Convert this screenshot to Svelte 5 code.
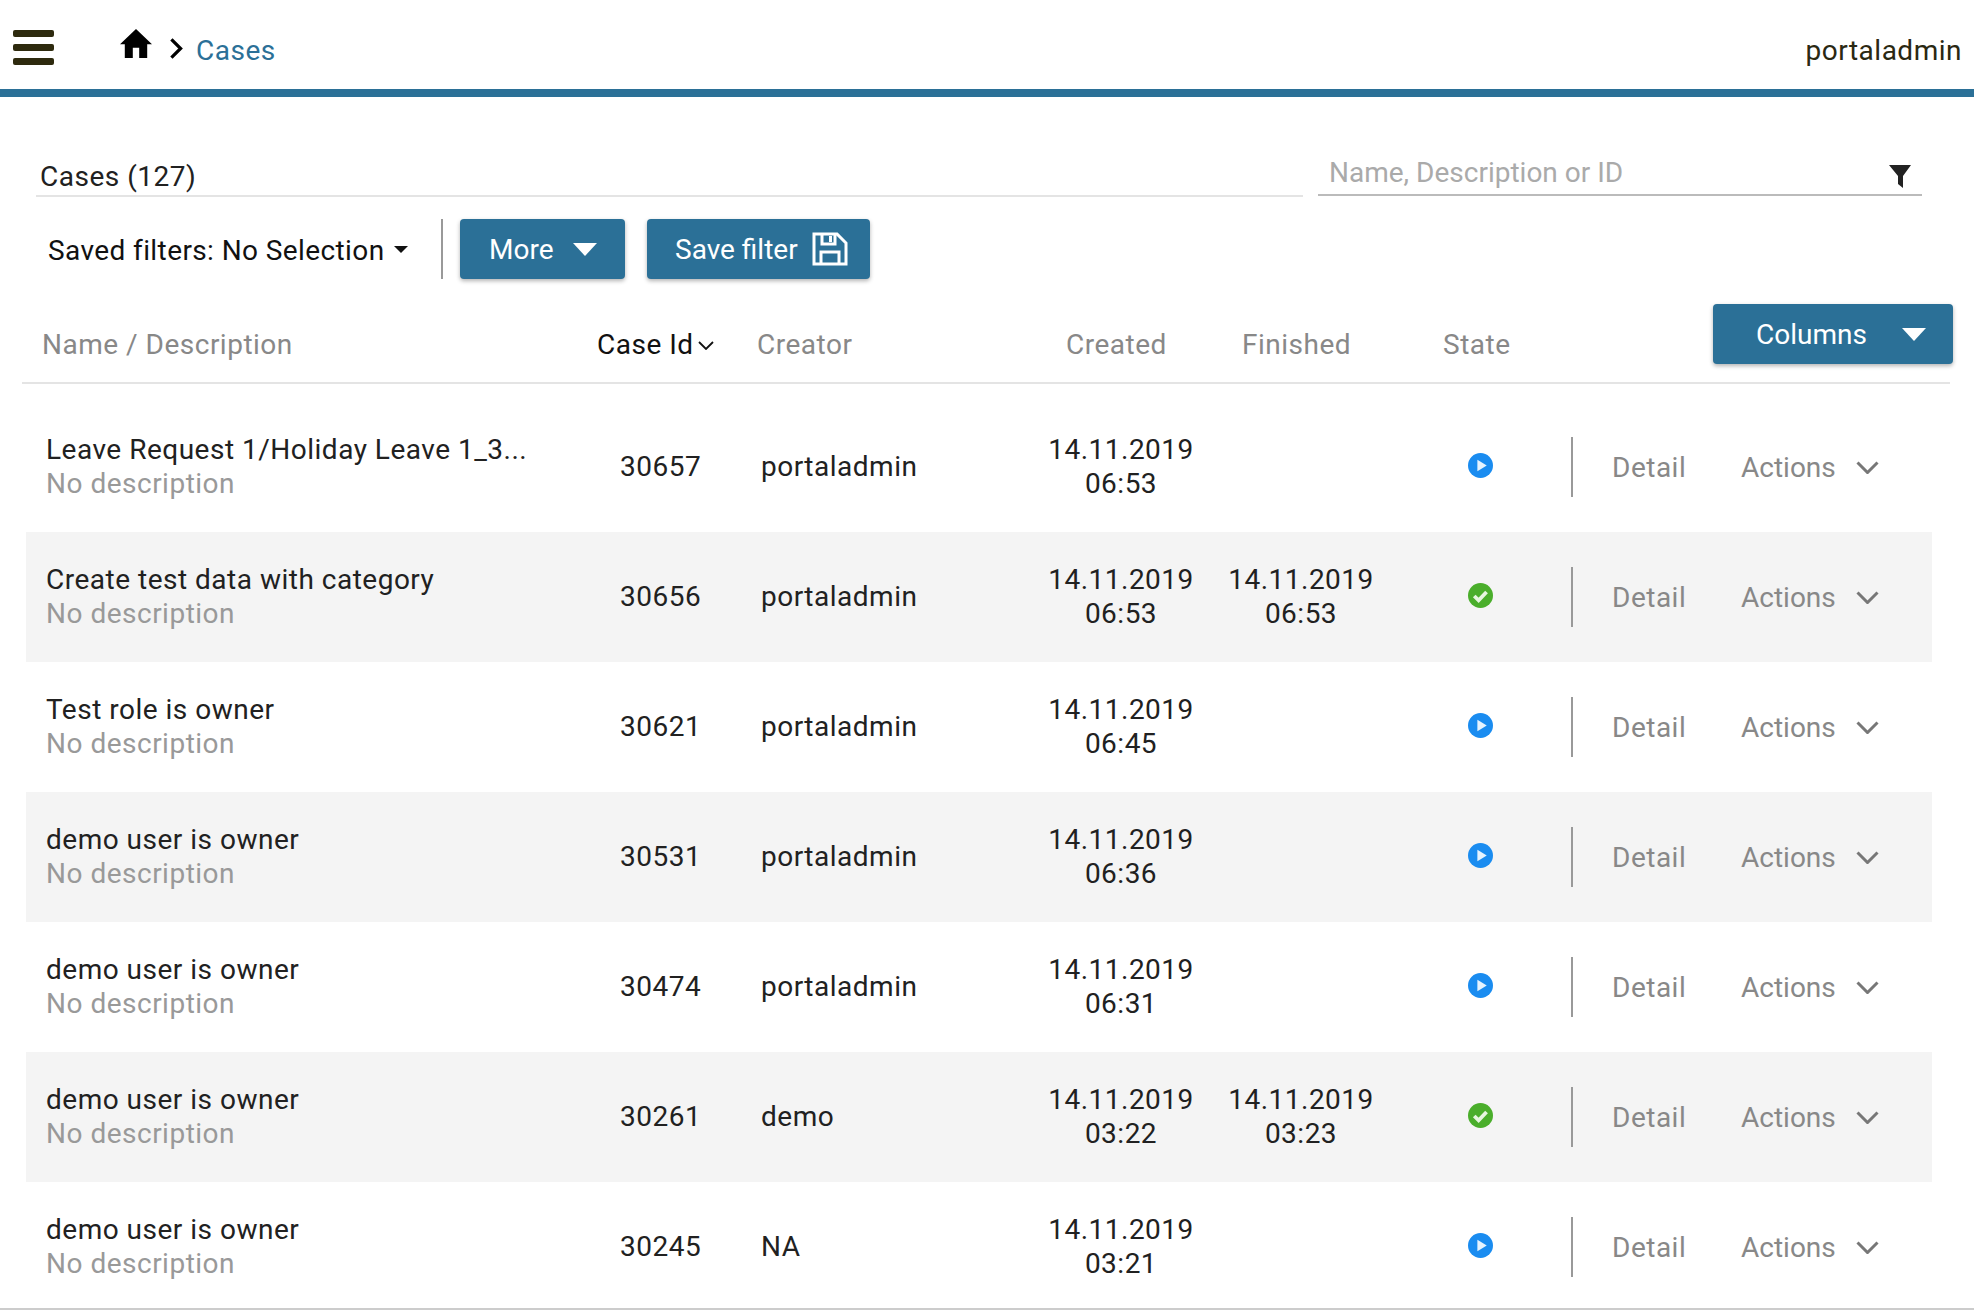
<script>
  const rows = [
    { name: 'Leave Request 1/Holiday Leave 1_3...', id: '30657', creator: 'portaladmin', created: ['14.11.2019', '06:53'], finished: null },
    { name: 'Create test data with category', id: '30656', creator: 'portaladmin', created: ['14.11.2019', '06:53'], finished: ['14.11.2019', '06:53'] },
    { name: 'Test role is owner', id: '30621', creator: 'portaladmin', created: ['14.11.2019', '06:45'], finished: null },
    { name: 'demo user is owner', id: '30531', creator: 'portaladmin', created: ['14.11.2019', '06:36'], finished: null },
    { name: 'demo user is owner', id: '30474', creator: 'portaladmin', created: ['14.11.2019', '06:31'], finished: null },
    { name: 'demo user is owner', id: '30261', creator: 'demo', created: ['14.11.2019', '03:22'], finished: ['14.11.2019', '03:23'] },
    { name: 'demo user is owner', id: '30245', creator: 'NA', created: ['14.11.2019', '03:21'], finished: null }
  ];
</script>

<div class="page">
  <header class="topbar">
    <div class="burger"><span></span><span></span><span></span></div>
    <svg class="home" viewBox="2 3 20 17" preserveAspectRatio="none" aria-hidden="true"><path d="M10 20v-6h4v6h5v-8h3L12 3 2 12h3v8z" /></svg>
    <svg class="crumb-chev" viewBox="0 0 12 20" aria-hidden="true"><path d="M2 2l8 8-8 8" /></svg>
    <span class="crumb">Cases</span>
    <span class="user">portaladmin</span>
  </header>

  <section class="titlebar">
    <div class="title">Cases (127)</div>
    <div class="search">
      <span class="placeholder">Name, Description or ID</span>
      <svg class="funnel" viewBox="0 0 22 23" aria-hidden="true"><path d="M0 0h22l-8 11v12l-5-4v-8z" /></svg>
    </div>
  </section>

  <section class="filters">
    <span class="saved">Saved filters: No Selection</span>
    <span class="saved-caret"></span>
    <span class="vline"></span>
    <button class="btn more">More <span class="caret"></span></button>
    <button class="btn save">Save filter
      <svg class="disk" viewBox="0 0 36 34" aria-hidden="true">
        <path d="M2 2h23l9 9v21H2z" />
        <path d="M10 2v10h13V2" />
        <path d="M9 32V20h18v12" />
        <rect class="slot" x="17" y="4" width="3" height="6" />
      </svg>
    </button>
  </section>

  <section class="thead">
    <span class="h-name">Name / Description</span>
    <span class="h-id">Case Id<svg viewBox="0 0 16 9" aria-hidden="true"><path d="M1 1l7 7 7-7" /></svg></span>
    <span class="h-creator">Creator</span>
    <span class="h-created">Created</span>
    <span class="h-finished">Finished</span>
    <span class="h-state">State</span>
    <button class="btn columns">Columns <span class="caret"></span></button>
  </section>

  <section class="tbody">
    {#each rows as r, i}
      <div class="row" class:alt={i % 2 === 1}>
        <div class="c-name">
          <div>{r.name}</div>
          <div class="desc">No description</div>
        </div>
        <div class="c-id">{r.id}</div>
        <div class="c-creator">{r.creator}</div>
        <div class="c-date">{r.created[0]}<br />{r.created[1]}</div>
        <div class="c-date">
          {#if r.finished}{r.finished[0]}<br />{r.finished[1]}{/if}
        </div>
        <div class="c-state">
          {#if r.finished}
            <svg viewBox="0 0 24 24" aria-hidden="true"><circle cx="12" cy="12" r="12" fill="#4aae2b" /><path d="M6 12.5l4.2 4.2 7.6-8" fill="none" stroke="#e6f5df" stroke-width="3.6" /></svg>
          {:else}
            <svg viewBox="0 0 24 24" aria-hidden="true"><circle cx="12" cy="12" r="12" fill="#1a8cf0" /><path d="M9 6.5l9 5.5-9 5.5z" fill="#e6f3fe" /></svg>
          {/if}
        </div>
        <div class="c-actions">
          <span class="detail">Detail</span>
          <span class="act">Actions</span>
          <svg viewBox="0 0 23 13" aria-hidden="true"><path d="M1.5 1.5l10 10 10-10" /></svg>
        </div>
      </div>
    {/each}
  </section>
</div>

<style>
  :global(body) { margin: 0; background: #fff; }
  .page {
    width: 1974px;
    height: 1310px;
    overflow: hidden;
    font-family: Roboto, "Liberation Sans", sans-serif;
    font-size: 28px;
    letter-spacing: 0.5px;
    color: #212121;
    box-sizing: border-box;
    border-bottom: 2px solid #ccc;
  }
  .topbar {
    height: 89px;
    border-bottom: 8px solid #2b7097;
    display: flex;
    align-items: flex-start;
    padding: 0 12px 0 13px;
  }
  .burger { width: 41px; margin-top: 30px; display: flex; flex-direction: column; gap: 7px; }
  .burger span { height: 7px; border-radius: 2px; background: #2e2a0e; }
  .home { width: 32px; height: 29px; margin: 29px 0 0 66px; fill: #000; }
  .crumb-chev { width: 14px; height: 23px; margin: 37px 0 0 17px; fill: none; stroke: #000; stroke-width: 2.8; }
  .crumb { margin: 35px 0 0 13px; color: #2b7097; line-height: 32px; }
  .user { margin: 35px 0 0 auto; line-height: 32px; color: #2a2812; }
  .titlebar { display: flex; height: 101px; padding-left: 36px; }
  .title {
    width: 1267px;
    height: 100px;
    box-sizing: border-box;
    border-bottom: 2px solid #e4e4e4;
    padding: 64px 0 0 4px;
    line-height: 32px;
  }
  .search {
    width: 604px;
    height: 99px;
    margin-left: 15px;
    box-sizing: border-box;
    border-bottom: 2px solid #bbb;
    padding: 60px 11px 0 11px;
    display: flex;
    justify-content: space-between;
    align-items: flex-start;
    line-height: 32px;
  }
  .placeholder { color: #aaa; letter-spacing: 0; }
  .funnel { width: 22px; height: 23px; margin-top: 8px; fill: #222; }
  .filters { display: flex; align-items: center; height: 60px; margin-top: 21px; padding-left: 48px; }
  .saved { color: #111; width: 336px; white-space: nowrap; letter-spacing: 0.4px; position: relative; top: 1px; }
  .saved-caret {
    width: 0; height: 0; margin-left: 10px;
    border-left: 7px solid transparent; border-right: 7px solid transparent; border-top: 7px solid #111;
  }
  .vline { width: 2px; height: 60px; background: #999; margin: 0 17px 0 33px; }
  .btn {
    border: 0;
    border-radius: 4px;
    height: 60px;
    padding: 0;
    background: #2b7097;
    color: #fff;
    font: inherit;
    letter-spacing: 0;
    box-shadow: 0 2px 4px rgba(0, 0, 0, 0.3);
    display: flex;
    align-items: center;
  }
  .caret {
    width: 0; height: 0;
    border-left: 12px solid transparent; border-right: 12px solid transparent; border-top: 13px solid #fff;
  }
  .more { width: 165px; padding-left: 29px; gap: 19px; }
  .save { width: 223px; margin-left: 22px; padding-left: 28px; gap: 14px; }
  .disk { width: 36px; height: 34px; fill: none; stroke: #fff; stroke-width: 3; }
  .disk .slot { fill: #fff; stroke: none; }
  .thead { position: relative; display: flex; height: 78px; margin: 25px 24px 0 22px; border-bottom: 2px solid #e4e4e4; color: #888; align-items: flex-start; }
  .thead > span { position: absolute; top: 25px; line-height: 32px; }
  .h-name { left: 20px; }
  .h-id { left: 575px; color: #111; display: flex; align-items: center; }
  .h-id svg { width: 16px; height: 9px; margin-left: 4px; fill: none; stroke: #111; stroke-width: 1.8; }
  .h-creator { left: 735px; }
  .h-created { left: 1044px; }
  .h-finished { left: 1220px; }
  .h-state { left: 1421px; }
  .columns { position: absolute; left: 1691px; top: 0; width: 240px; padding-left: 43px; gap: 35px; }
  .tbody { margin: 18px 42px 0 26px; }
  .row {
    height: 130px;
    padding-left: 20px;
    display: grid;
    grid-template-columns: 574px 141px 269px 180px 180px 181px 1fr;
    align-items: center;
    line-height: 34px;
  }
  .row.alt { background: #f4f4f4; }
  .desc { color: #999; }
  .c-id, .c-creator { margin-bottom: 1px; }
  .c-date { text-align: center; padding-left: 2px; }
  .c-state { display: flex; justify-content: center; margin-bottom: 3px; }
  .c-state svg { width: 25px; height: 25px; }
  .c-actions {
    height: 60px;
    border-left: 2px solid #999;
    padding-left: 39px;
    display: flex;
    align-items: center;
    color: #888;
  }
  .detail { width: 129px; padding-top: 2px; }
  .act { width: 115px; letter-spacing: 0; padding-top: 2px; }
  .c-actions svg { width: 23px; height: 13px; fill: none; stroke: #777; stroke-width: 3; }
</style>
